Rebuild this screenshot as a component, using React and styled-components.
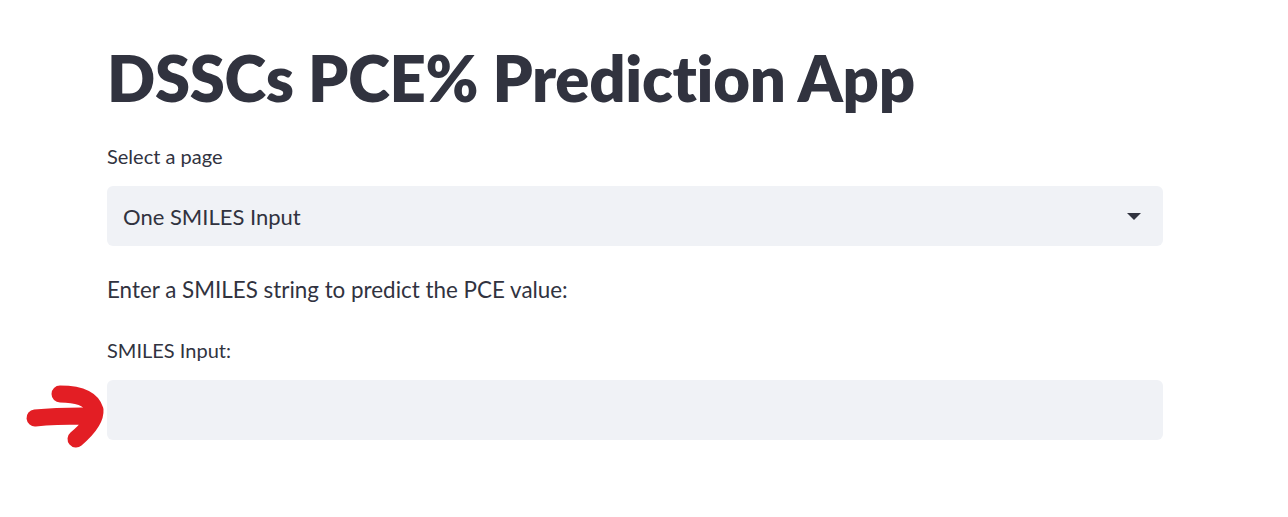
import React from "react";
import styled, { createGlobalStyle } from "styled-components";

const GlobalStyle = createGlobalStyle`
    html, body {
        margin: 0;
        padding: 0;
        background: #ffffff;
    }
    body {
        font-family: Lato, "Source Sans Pro", "Noto Sans", sans-serif;
        color: #31333f;
    }
`;

const Page = styled.main`
    width: 1288px;
    height: 517px;
    overflow: hidden;
    box-sizing: border-box;
    padding: 38px 0 0 107px;
`;

const Block = styled.div`
    width: 1056px;
    display: flex;
    flex-direction: column;
`;

const Title = styled.h1`
    margin: 0;
    font-family: Lato, sans-serif;
    font-weight: 800;
    font-size: 63.4px;
    line-height: 80px;
    letter-spacing: -0.3px;
    color: #31333f;
`;

const Label = styled.label`
    display: block;
    font-size: 20px;
    line-height: 24px;
    margin-top: ${(p) => p.$top}px;
    margin-bottom: ${(p) => p.$bottom}px;
    color: #31333f;
`;

const Text = styled.p`
    margin: 30px 0 0;
    font-size: 22.4px;
    line-height: 28px;
`;

const Field = styled.div`
    position: relative;
    height: 60px;
    border-radius: 6px;
    background: #f0f2f6;
    display: flex;
    align-items: center;
    justify-content: space-between;
    padding: 0 22px 0 16px;
    box-sizing: border-box;
`;

const Value = styled.span`
    font-size: 22px;
    color: #31333f;
`;

const Caret = styled.span`
    width: 0;
    height: 0;
    border-left: 7px solid transparent;
    border-right: 7px solid transparent;
    border-top: 7px solid #31333f;
`;

const Marker = styled.svg`
    position: absolute;
    left: -107px;
    top: -10px;
    width: 107px;
    height: 80px;
    overflow: visible;
`;

export default function App() {
    return (
        <>
            <GlobalStyle />
            <Page>
                <Block>
                    <Title>DSSCs PCE% Prediction App</Title>
                    <Label $top={26} $bottom={18}>Select a page</Label>
                    <Field>
                        <Value>One SMILES Input</Value>
                        <Caret />
                    </Field>
                    <Text>Enter a SMILES string to predict the PCE value:</Text>
                    <Label $top={34} $bottom={18}>SMILES Input:</Label>
                    <Field>
                        <Marker viewBox="0 0 107 80">
                            <path
                                d="M35 48 Q55 46 82 46 M60 24 Q90 24 95 40 Q96 52 76 69"
                                fill="none"
                                stroke="#e31e24"
                                strokeWidth="17"
                                strokeLinecap="round"
                                strokeLinejoin="round"
                            />
                        </Marker>
                    </Field>
                </Block>
            </Page>
        </>
    );
}
